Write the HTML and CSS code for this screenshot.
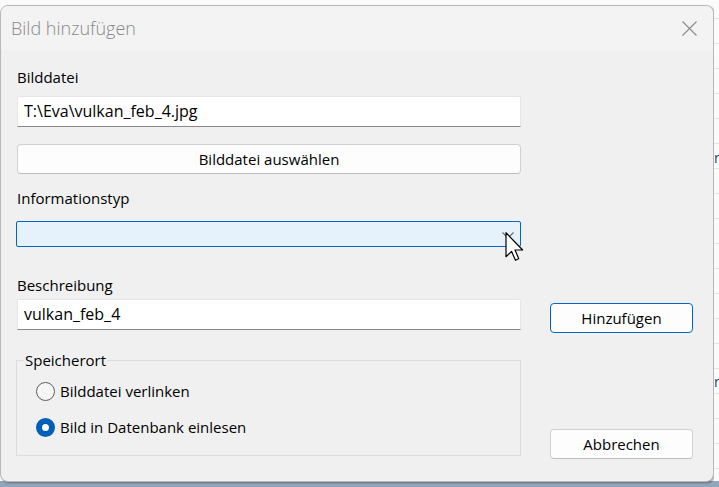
FILE: index.html
```html
<!DOCTYPE html>
<html lang="de">
<head>
  <meta charset="UTF-8" />
  <meta name="viewport" content="width=device-width, initial-scale=1.0"/>
  <title>Bild hinzufügen</title>
  <link rel="stylesheet" href="styles.css">
</head>
<body>
  <div class="desktop">

    <!-- Dialog window -->
    <div class="dialog">
      <div class="titlebar">
        <span class="title">Bild hinzufügen</span>
        <svg class="close" width="15" height="15" viewBox="0 0 15 15">
          <path d="M0.5 0.5 L14.5 14.5 M14.5 0.5 L0.5 14.5" stroke="#8a8a8a" stroke-width="1.1" fill="none"/>
        </svg>
      </div>

      <div class="content">
        <div class="main-col">
          <label class="label first">Bilddatei</label>
          <div class="textbox">T:\Eva\vulkan_feb_4.jpg</div>
          <button class="btn wide">Bilddatei auswählen</button>

          <label class="label info">Informationstyp</label>
          <div class="combo">
            <svg class="chevron" width="12" height="7" viewBox="0 0 12 7">
              <path d="M0.5 0.5 L6 6 L11.5 0.5" stroke="#6a6a6a" stroke-width="1.1" fill="none"/>
            </svg>
            <svg class="pointer" width="20" height="30" viewBox="0 0 13 20">
              <path d="M0.5 0.5 L0.5 16.5 L4.2 12.9 L6.8 18.8 L9 17.8 L6.5 12 L11.6 12 Z" fill="#fff" stroke="#000" stroke-width="0.8" stroke-linejoin="round"/>
            </svg>
          </div>

          <label class="label desc">Beschreibung</label>
          <div class="textbox">vulkan_feb_4</div>

          <fieldset class="group">
            <legend>Speicherort</legend>
            <div class="radio-row first">
              <span class="radio"></span>
              <span>Bilddatei verlinken</span>
            </div>
            <div class="radio-row">
              <span class="radio checked"></span>
              <span>Bild in Datenbank einlesen</span>
            </div>
          </fieldset>
        </div>

        <div class="side-col">
          <button class="btn default">Hinzufügen</button>
          <button class="btn cancel">Abbrechen</button>
        </div>
      </div>
    </div>

    <!-- Application behind the dialog -->
    <div class="edge">
      <span class="edge-text top">r</span>
      <span class="edge-text bottom">r</span>
    </div>
  </div>
</body>
</html>
```

FILE: styles.css
```css
body {
  margin: 0;
  padding: 0;
  font-family: "Open Sans", "Noto Sans", sans-serif;
  font-size: 15px;
  color: #000;
}
.desktop {
  display: flex;
  width: 719px;
  height: 487px;
  overflow: hidden;
  background: linear-gradient(#fbfbfb 0, #fbfbfb 481px, #93a5bb 481px);
}
.dialog {
  flex: none;
  box-sizing: border-box;
  width: 714px;
  height: 477px;
  margin-top: 5px;
  background: #f0f0f0;
  border: 1px solid #b8b8b8;
  border-radius: 8px;
  box-shadow: 1px 1px 2px rgba(0,0,0,0.35);
  overflow: hidden;
}
.titlebar {
  display: flex;
  justify-content: space-between;
  align-items: center;
  height: 44px;
  padding: 0 16px 0 10px;
  background: #f3f3f3;
}
.title {
  font-size: 18px;
  font-weight: 300;
  color: #8a8a8a;
}
.close {
  display: block;
}
.content {
  display: grid;
  grid-template-columns: 504px 143px;
  column-gap: 29px;
  padding-left: 16px;
}
.main-col {
  display: flex;
  flex-direction: column;
}
.label {
  line-height: 20px;
  height: 20px;
}
.label.first {
  margin-top: 17px;
}
.label.info {
  margin-top: 14px;
}
.label.desc {
  margin-top: 28px;
}
.textbox {
  box-sizing: border-box;
  height: 31px;
  margin-top: 9px;
  padding: 0 6px;
  line-height: 28px;
  font-size: 16px;
  background: #fff;
  border: 1px solid #e6e6e6;
  border-bottom-color: #878787;
  border-radius: 2px 2px 0 0;
}
.label.desc + .textbox {
  margin-top: 4px;
}
.btn {
  box-sizing: border-box;
  height: 30px;
  padding: 0;
  font-family: inherit;
  font-size: 15px;
  color: #000;
  background: #fdfdfd;
  border: 1px solid #d0d0d0;
  border-bottom-color: #bdbdbd;
  border-radius: 4px;
}
.btn.wide {
  margin-top: 17px;
}
.combo {
  position: relative;
  box-sizing: border-box;
  height: 26px;
  margin-top: 13px;
  margin-left: -1px;
  background: #e5f1fb;
  border: 1px solid #0067c0;
  border-radius: 2px;
}
.chevron {
  position: absolute;
  right: 6px;
  top: 10px;
}
.pointer {
  position: absolute;
  right: -5px;
  top: 10px;
}
.group {
  margin: 20px 0 0 -1px;
  padding: 0 0 17px 19px;
  height: 87px;
  border: 1px solid #dcdcdc;
}
.group legend {
  margin-left: -12px;
  padding: 0 1px;
  line-height: 20px;
}
.radio-row {
  display: flex;
  align-items: center;
  gap: 5px;
  height: 22px;
  margin-top: 14px;
}
.radio-row.first {
  margin-top: 10px;
}
.radio {
  box-sizing: border-box;
  width: 19px;
  height: 19px;
  border: 1px solid #5d5d5d;
  border-radius: 50%;
  background: #f6f6f6;
}
.radio.checked {
  border: 6px solid #005fb8;
  background: #fff;
}
.side-col {
  display: flex;
  flex-direction: column;
}
.btn.default {
  margin-top: 253px;
  border: 1px solid #0067c0;
}
.btn.cancel {
  margin-top: 96px;
}
.edge {
  flex: 1;
  position: relative;
  height: 481px;
  background: repeating-linear-gradient(#fbfbfb 0, #fbfbfb 24px, #e2e2e2 24px, #e2e2e2 25px);
  background-position: 0 -6px;
}
.edge-text {
  position: absolute;
  left: 0;
  font-size: 14px;
  color: #1f3f6a;
}
.edge-text.top {
  top: 148px;
}
.edge-text.bottom {
  top: 372px;
}
```
